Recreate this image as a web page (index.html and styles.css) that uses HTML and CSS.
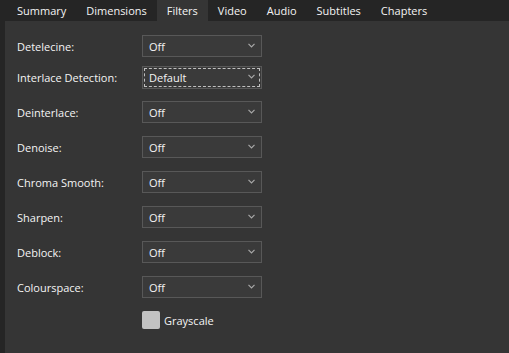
FILE: index.html
```html
<!DOCTYPE html>
<html lang="en">
<head>
    <meta charset="UTF-8">
    <title>Filters</title>
    <link rel="stylesheet" href="styles.css">
</head>
<body>

    <div class="window">
        <ul class="tabs">
            <li class="tab">Summary</li>
            <li class="tab">Dimensions</li>
            <li class="tab active">Filters</li>
            <li class="tab">Video</li>
            <li class="tab">Audio</li>
            <li class="tab">Subtitles</li>
            <li class="tab">Chapters</li>
        </ul>

        <div class="panel">
            <div class="row first">
                <label>Detelecine:</label>
                <div class="select"><span>Off</span><svg class="chev" width="7" height="5" viewBox="0 0 7 5"><path d="M0.5 0.8 L3.5 3.8 L6.5 0.8" fill="none" stroke="#a8a8a8" stroke-width="1.2"/></svg></div>
            </div>
            <div class="row">
                <label>Interlace Detection:</label>
                <div class="select focused"><span>Default</span><svg class="chev" width="7" height="5" viewBox="0 0 7 5"><path d="M0.5 0.8 L3.5 3.8 L6.5 0.8" fill="none" stroke="#a8a8a8" stroke-width="1.2"/></svg></div>
            </div>
            <div class="row">
                <label>Deinterlace:</label>
                <div class="select"><span>Off</span><svg class="chev" width="7" height="5" viewBox="0 0 7 5"><path d="M0.5 0.8 L3.5 3.8 L6.5 0.8" fill="none" stroke="#a8a8a8" stroke-width="1.2"/></svg></div>
            </div>
            <div class="row">
                <label>Denoise:</label>
                <div class="select"><span>Off</span><svg class="chev" width="7" height="5" viewBox="0 0 7 5"><path d="M0.5 0.8 L3.5 3.8 L6.5 0.8" fill="none" stroke="#a8a8a8" stroke-width="1.2"/></svg></div>
            </div>
            <div class="row">
                <label>Chroma Smooth:</label>
                <div class="select"><span>Off</span><svg class="chev" width="7" height="5" viewBox="0 0 7 5"><path d="M0.5 0.8 L3.5 3.8 L6.5 0.8" fill="none" stroke="#a8a8a8" stroke-width="1.2"/></svg></div>
            </div>
            <div class="row">
                <label>Sharpen:</label>
                <div class="select"><span>Off</span><svg class="chev" width="7" height="5" viewBox="0 0 7 5"><path d="M0.5 0.8 L3.5 3.8 L6.5 0.8" fill="none" stroke="#a8a8a8" stroke-width="1.2"/></svg></div>
            </div>
            <div class="row">
                <label>Deblock:</label>
                <div class="select"><span>Off</span><svg class="chev" width="7" height="5" viewBox="0 0 7 5"><path d="M0.5 0.8 L3.5 3.8 L6.5 0.8" fill="none" stroke="#a8a8a8" stroke-width="1.2"/></svg></div>
            </div>
            <div class="row">
                <label>Colourspace:</label>
                <div class="select"><span>Off</span><svg class="chev" width="7" height="5" viewBox="0 0 7 5"><path d="M0.5 0.8 L3.5 3.8 L6.5 0.8" fill="none" stroke="#a8a8a8" stroke-width="1.2"/></svg></div>
            </div>
            <div class="check-row">
                <span class="checkbox"></span>
                <span class="check-label">Grayscale</span>
            </div>
        </div>
    </div>

</body>
</html>
```

FILE: styles.css
```css
* {
    box-sizing: border-box;
}

html, body {
    margin: 0;
    height: 100%;
}

body {
    background-color: #252525;
    font-family: "Open Sans", "Noto Sans", sans-serif;
    font-size: 11px;
    color: #f4f4f4;
    overflow: hidden;
}

.window {
    display: flex;
    flex-direction: column;
    height: 100%;
    padding-left: 5px;
}

.tabs {
    display: flex;
    list-style: none;
    margin: 0;
    padding: 0 0 0 2px;
    height: 21px;
}

.tab {
    padding: 0 10px;
    line-height: 21px;
}

.tab.active {
    background-color: #353535;
}

.panel {
    flex: 1;
    background-color: #353535;
    padding: 14px 0 0 12px;
}

.row {
    display: flex;
    align-items: center;
    height: 22px;
    margin-bottom: 13px;
}

.row.first {
    margin-bottom: 9px;
}

.row label {
    width: 125px;
}

.select {
    display: flex;
    align-items: center;
    justify-content: space-between;
    width: 120px;
    height: 22px;
    padding: 0 6px 0 6px;
    background-color: #3a3a3a;
    border: 1px solid #585858;
}

.select.focused {
    height: 23px;
    outline: 1px dashed #c0c0c0;
    outline-offset: -3px;
}

.chev {
    margin-top: -2px;
}

.check-row {
    display: flex;
    align-items: center;
    margin-left: 125px;
    margin-top: 2px;
}

.checkbox {
    width: 18px;
    height: 18px;
    background-color: #c2c2c2;
    border-radius: 2px;
    margin-right: 4px;
}
```
